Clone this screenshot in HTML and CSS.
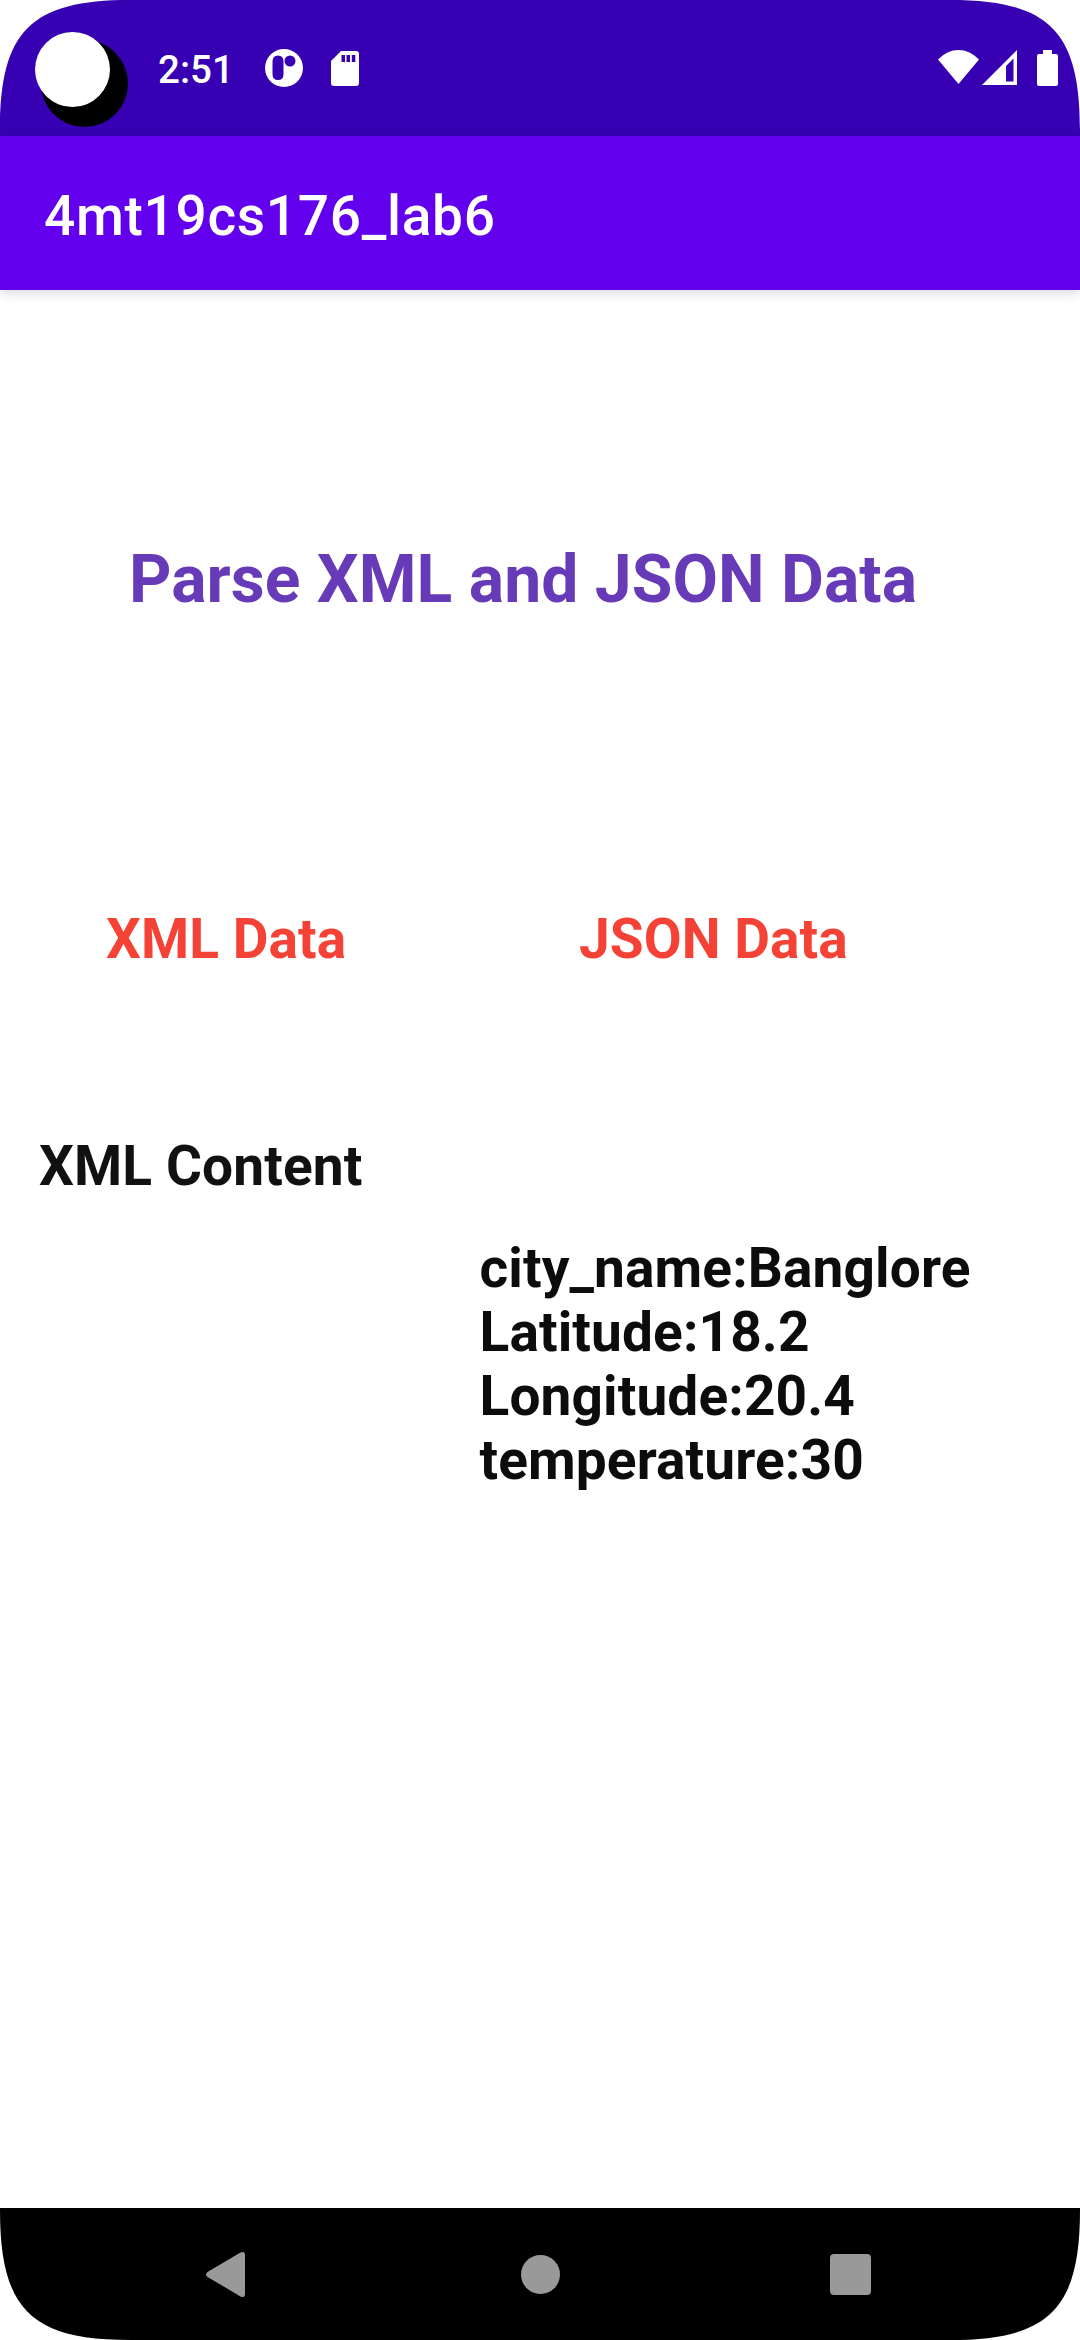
FILE: index.html
```html
<!DOCTYPE html>
<html lang="en">
<head>
<meta charset="utf-8">
<title>4mt19cs176_lab6</title>
<link rel="stylesheet" href="styles.css">
</head>
<body>
<div class="screen">
  <header class="status">
    <svg class="camera" viewBox="0 0 96 96"><circle cx="50.5" cy="52.5" r="43.5" fill="#000"/><circle cx="38.5" cy="38.5" r="37.5" fill="#fff"/></svg>
    <span class="clock">2:51</span>
    <svg class="notice" viewBox="0 0 38 38"><path fill-rule="evenodd" d="M19 0a19 19 0 1 0 0 38a19 19 0 1 0 0-38zM13 6.500q5.500 0 5.500 6v12.500q0 6-5.500 6t-5.500-6v-12.500q0-6 5.500-6zM25 6.500a5.500 5.500 0 1 1 0 11a5.500 5.500 0 1 1 0-11z"/></svg>
    <svg class="sdcard" viewBox="0 0 28 35"><path fill-rule="evenodd" d="M10 0h15q3 0 3 3v29q0 3-3 3H3q-3 0-3-3V10zM10.500 4v7h3.500v-7zM15.500 4v7h3.500v-7zM20.800 4v7h3.500v-7z"/></svg>
    <div class="system">
      <svg class="wifi" viewBox="0 0 41 34"><path d="M0 9.500Q9 0 20.500 0T41 9.500L20.500 34z"/></svg>
      <svg class="signal" viewBox="0 0 35 35"><path fill-rule="evenodd" d="M35 0v35H0zM31.500 8.500L24 16v15.500h7.500z"/></svg>
      <svg class="battery" viewBox="0 0 21 36"><path d="M6 0h9v4h4q2 0 2 2v28q0 2-2 2H2q-2 0-2-2V6q0-2 2-2h4z"/></svg>
    </div>
  </header>
  <div class="toolbar"><h1 class="title">4mt19cs176_lab6</h1></div>
  <main class="content">
    <h2 class="heading">Parse XML and JSON Data</h2>
    <div class="actions"><span class="action">XML Data</span><span class="action">JSON Data</span></div>
    <p class="xml">XML Content</p>
    <p class="json">city_name:Banglore<br>Latitude:18.2<br>Longitude:20.4<br>temperature:30</p>
  </main>
  <nav class="nav">
    <svg class="back" viewBox="0 0 39 45"><path d="M34.500 .6Q39-1.500 39 3.500v38q0 5-4.500 2.900L1.500 25Q-1.500 22.500 1.500 20z"/></svg>
    <svg class="home" viewBox="0 0 39 39"><circle cx="19.500" cy="19.500" r="19.500"/></svg>
    <svg class="recent" viewBox="0 0 41 41"><rect width="41" height="41" rx="4"/></svg>
  </nav>
</div>
<svg class="corner top left" viewBox="0 0 130 130"><path d="M0 0H130C31 0 0 31 0 130z"/></svg>
<svg class="corner top right" viewBox="0 0 130 130"><path d="M0 0H130C31 0 0 31 0 130z"/></svg>
<svg class="corner bottom left" viewBox="0 0 130 130"><path d="M0 0H130C31 0 0 31 0 130z"/></svg>
<svg class="corner bottom right" viewBox="0 0 130 130"><path d="M0 0H130C31 0 0 31 0 130z"/></svg>
</body>
</html>
```
FILE: styles.css
```css
* { box-sizing: border-box; }
body { margin: 0; background: #fff; font-family: Roboto, sans-serif; }
h1, h2, p { margin: 0; }
svg { display: block; flex: none; }
.screen { width: 1080px; height: 2340px; display: flex; flex-direction: column; }
.status { height: 136px; background: #3700b3; display: flex; align-items: flex-start; fill: #fff; }
.camera { width: 96px; height: 96px; margin: 31px 0 0 34px; }
.clock { width: 72px; margin: 47px 0 0 28px; color: #fff; font-size: 38.5px; line-height: 46px; font-weight: 500; white-space: nowrap; }
.notice { width: 38px; height: 38px; margin: 49px 0 0 35px; }
.sdcard { width: 28px; height: 35px; margin: 51px 0 0 28px; }
.system { margin: 50px 22px 0 auto; display: flex; }
.wifi { width: 41px; height: 34px; }
.signal { width: 35px; height: 35px; margin-left: 3px; }
.battery { width: 21px; height: 36px; margin-left: 20px; }
.toolbar { height: 154px; padding: 6px 0 0 44px; background: #6200ee; display: flex; align-items: center; box-shadow: 0 4px 11px rgba(0, 0, 0, .13); }
.title { color: #fff; font-size: 55px; line-height: 64px; font-weight: 500; letter-spacing: .0125em; }
.content { flex: 1; color: #0c0c0c; font-size: 55px; line-height: 64px; font-weight: 700; padding-top: 251px; }
.heading { margin-left: 129px; color: #673ab7; font-size: 66px; line-height: 78px; font-weight: 700; letter-spacing: .04px; }
.actions { display: grid; grid-template-columns: 473px 1fr; margin: 288px 0 0 106px; color: #f44336; letter-spacing: .06px; }
.xml { margin: 163px 0 0 39px; color: #111; letter-spacing: .12px; }
.json { margin: 38px 0 0 479.5px; letter-spacing: .12px; }
.nav { height: 132px; background: #000; fill: #999; display: flex; align-items: center; padding: 1px 0 0 206px; }
.back { width: 39px; height: 45px; }
.home { width: 39px; height: 39px; margin-left: 276px; }
.recent { width: 41px; height: 41px; margin-left: 270px; }
.corner { position: absolute; width: 130px; height: 130px; fill: #fff; }
.top { top: 0; }
.bottom { top: 2210px; }
.left { left: 0; }
.right { left: 950px; transform: scaleX(-1); }
.bottom.left { transform: scaleY(-1); }
.bottom.right { transform: scale(-1, -1); }
```
